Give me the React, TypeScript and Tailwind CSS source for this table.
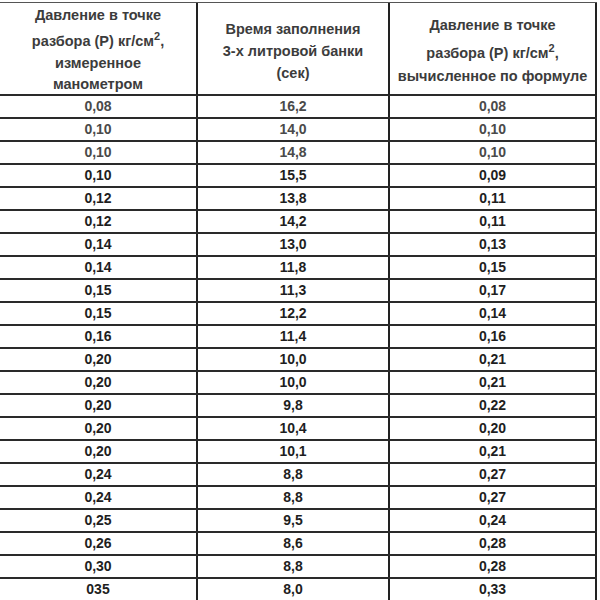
const rows: [string, string, string][] = [
  ['0,08', '16,2', '0,08'],
  ['0,10', '14,0', '0,10'],
  ['0,10', '14,8', '0,10'],
  ['0,10', '15,5', '0,09'],
  ['0,12', '13,8', '0,11'],
  ['0,12', '14,2', '0,11'],
  ['0,14', '13,0', '0,13'],
  ['0,14', '11,8', '0,15'],
  ['0,15', '11,3', '0,17'],
  ['0,15', '12,2', '0,14'],
  ['0,16', '11,4', '0,16'],
  ['0,20', '10,0', '0,21'],
  ['0,20', '10,0', '0,21'],
  ['0,20', '9,8', '0,22'],
  ['0,20', '10,4', '0,20'],
  ['0,20', '10,1', '0,21'],
  ['0,24', '8,8', '0,27'],
  ['0,24', '8,8', '0,27'],
  ['0,25', '9,5', '0,24'],
  ['0,26', '8,6', '0,28'],
  ['0,30', '8,8', '0,28'],
  ['035', '8,0', '0,33'],
]

function Sup() {
  return <span className="relative -top-[6px] text-[11px]">2</span>
}

export default function App() {
  return (
    <div
      className="w-[600px] h-[600px] overflow-hidden bg-white pt-[2px]"
      style={{ fontFamily: '"Liberation Sans", Arial, sans-serif' }}
    >
      <div className="w-[597px] border-t border-[#555]">
        {/* header */}
        <div className="grid grid-cols-[198px_192px_207px] h-[93px] border-b-2 border-[#2a2a2a] font-bold text-[14.5px] text-[#3c3c3c] text-center">
          <div className="border-r-2 border-[#222] pt-[2px] leading-[21px]">
            <div>Давление в точке</div>
            <div className="mt-[5px]">
              разбора (Р) кг/см<Sup />,
            </div>
            <div>измеренное</div>
            <div>манометром</div>
          </div>
          <div className="border-r-2 border-[#222] pt-[15px] leading-[22px]">
            <div>Время заполнения</div>
            <div>3-х литровой банки</div>
            <div>(сек)</div>
          </div>
          <div className="border-r-2 border-[#222] pt-[12px] leading-[21px]">
            <div>Давление в точке</div>
            <div className="mt-[6px] leading-[23px]">
              разбора (Р) кг/см<Sup />,
            </div>
            <div>вычисленное по формуле</div>
          </div>
        </div>

        {/* rows */}
        {rows.map((r, i) => (
          <div
            key={i}
            className={`grid grid-cols-[198px_192px_207px] h-[23px] border-b-2 border-[#2a2a2a] font-bold text-[14px] leading-[21px] text-center ${
              i < 3 ? 'text-[#4a4a4a]' : 'text-[#1e1e1e]'
            }`}
          >
            <div className="border-r-2 border-[#222]">{r[0]}</div>
            <div className="border-r-2 border-[#222]">{r[1]}</div>
            <div className="border-r-2 border-[#222]">{r[2]}</div>
          </div>
        ))}
      </div>
    </div>
  )
}
